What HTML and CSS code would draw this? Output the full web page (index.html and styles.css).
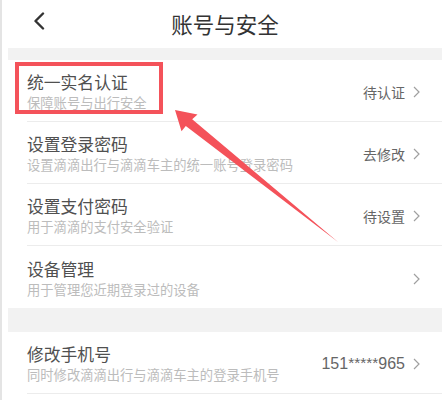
FILE: index.html
```html
<!DOCTYPE html>
<html lang="zh-CN">
<head>
<meta charset="utf-8">
<title>账号与安全</title>
<link rel="stylesheet" href="styles.css">
</head>
<body>
<div class="screen">
  <div class="content">
    <header class="nav">
      <svg class="back" width="12" height="18" viewBox="0 0 12 18"><polyline points="10,1.5 2.5,9 10,16.5" fill="none" stroke="#333" stroke-width="2.4" stroke-linecap="round" stroke-linejoin="round"/></svg>
      <h1 class="nav-title">账号与安全</h1>
    </header>
    <div class="gap gap-sm"></div>
    <div class="group">
      <div class="row">
        <div class="row-inner">
          <div class="texts"><div class="title">统一实名认证</div><div class="sub">保障账号与出行安全</div></div>
          <div class="value">待认证</div>
          <svg class="chev" width="7" height="12" viewBox="0 0 7 12"><polyline points="1,1 6,6 1,11" fill="none" stroke="#a0a0a0" stroke-width="1.2"/></svg>
        </div>
      </div>
      <div class="row">
        <div class="row-inner">
          <div class="texts"><div class="title">设置登录密码</div><div class="sub">设置滴滴出行与滴滴车主的统一账号登录密码</div></div>
          <div class="value">去修改</div>
          <svg class="chev" width="7" height="12" viewBox="0 0 7 12"><polyline points="1,1 6,6 1,11" fill="none" stroke="#a0a0a0" stroke-width="1.2"/></svg>
        </div>
      </div>
      <div class="row">
        <div class="row-inner">
          <div class="texts"><div class="title">设置支付密码</div><div class="sub">用于滴滴的支付安全验证</div></div>
          <div class="value">待设置</div>
          <svg class="chev" width="7" height="12" viewBox="0 0 7 12"><polyline points="1,1 6,6 1,11" fill="none" stroke="#a0a0a0" stroke-width="1.2"/></svg>
        </div>
      </div>
      <div class="row last">
        <div class="row-inner">
          <div class="texts"><div class="title">设备管理</div><div class="sub">用于管理您近期登录过的设备</div></div>
          <svg class="chev" width="7" height="12" viewBox="0 0 7 12"><polyline points="1,1 6,6 1,11" fill="none" stroke="#a0a0a0" stroke-width="1.2"/></svg>
        </div>
      </div>
    </div>
    <div class="gap gap-lg"></div>
    <div class="group">
      <div class="row">
        <div class="row-inner">
          <div class="texts"><div class="title">修改手机号</div><div class="sub">同时修改滴滴出行与滴滴车主的登录手机号</div></div>
          <div class="value num">151<span class="ast">*****</span>965</div>
          <svg class="chev" width="7" height="12" viewBox="0 0 7 12"><polyline points="1,1 6,6 1,11" fill="none" stroke="#a0a0a0" stroke-width="1.2"/></svg>
        </div>
      </div>
    </div>
  </div>
  <svg class="annot" width="445" height="400" viewBox="0 0 445 400">
    <rect x="17" y="64" width="144" height="48" fill="none" stroke="#f4525a" stroke-width="4"/>
    <polygon points="175,110 197.5,114.5 192.2,119.3 338.3,242.3 185.8,125.9 181.5,131.2" fill="#f4525a"/>
  </svg>
</div>
</body>
</html>
```
FILE: styles.css
```css
html, body {
  margin: 0;
  padding: 0;
  background: #fff;
}
body {
  font-family: "Noto Sans CJK SC", "Noto Sans", sans-serif;
}
.screen {
  position: relative;
  width: 445px;
  height: 400px;
  overflow: hidden;
  box-sizing: border-box;
  border-left: 2px solid #e4e4e4;
  padding: 0 3px 0 6px;
}
.content {
  width: 434px;
}
.nav {
  position: relative;
  height: 48px;
  display: flex;
  align-items: center;
  justify-content: center;
}
.back {
  position: absolute;
  left: 25px;
  top: 12px;
}
.nav-title {
  margin: 0;
  font-size: 21.5px;
  font-weight: 400;
  color: #333;
  line-height: 48px;
}
.gap {
  background: #f2f2f2;
}
.gap-sm { height: 12px; }
.gap-lg { height: 24px; }
.row {
  height: 62px;
  padding-left: 19px;
  box-sizing: border-box;
}
.row-inner {
  height: 62px;
  box-sizing: border-box;
  border-bottom: 1px solid #ececec;
  display: flex;
  align-items: center;
  padding: 3px 22px 0 0;
}
.row.last .row-inner {
  border-bottom: none;
}
.texts {
  flex: 1;
  min-width: 0;
}
.title {
  font-size: 16.8px;
  line-height: 22px;
  color: #505050;
  white-space: nowrap;
}
.sub {
  font-size: 13.3px;
  line-height: 20px;
  color: #bcbcbc;
  white-space: nowrap;
}
.value {
  font-size: 14px;
  color: #666;
  margin-right: 8px;
}
.num {
  font-family: "Liberation Sans", Arial, sans-serif;
  font-size: 16px;
  color: #666;
}
.ast {
  position: relative;
  top: -1px;
  font-size: 15.5px;
}
.chev {
  display: block;
  flex: none;
}
.annot {
  position: absolute;
  left: -2px;
  top: 0;
  pointer-events: none;
}
```
